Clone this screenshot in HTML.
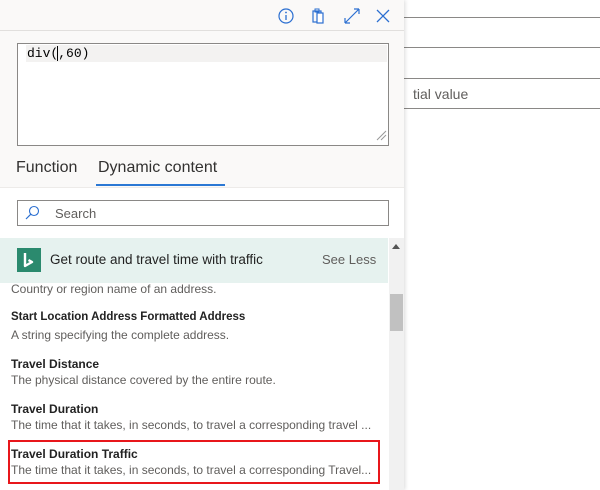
<!DOCTYPE html>
<html><head><style>
*{margin:0;padding:0;box-sizing:border-box}
body{width:600px;height:490px;overflow:hidden;background:#fff;font-family:"Liberation Sans",sans-serif;position:relative}
.abs{position:absolute}
.hl{position:absolute;left:404px;right:0;height:1px;background:#8a8886}
.panel{position:absolute;left:0;top:0;width:404px;height:490px;background:#faf9f8;box-shadow:1px 0 4px rgba(0,0,0,.15)}
.t{font-size:12px;font-weight:bold;color:#222;position:absolute;left:11px}
.d{font-size:12px;color:#605e5c;position:absolute;left:11px;white-space:nowrap}
</style></head><body>
<div class="hl" style="top:17px"></div>
<div class="hl" style="top:47px"></div>
<div class="hl" style="top:78px"></div>
<div class="hl" style="top:108px"></div>
<div class="abs" style="left:413px;top:86px;font-size:14px;color:#605e5c">tial value</div>
<div class="panel">
 <div class="abs" style="left:0;top:30px;width:404px;height:1px;background:#e1dfdd"></div>
 <svg class="abs" style="left:276px;top:6px" width="20" height="20" viewBox="0 0 20 20"><circle cx="10" cy="10" r="7" fill="none" stroke="#2b6fd1" stroke-width="1.2"/><line x1="10" y1="9" x2="10" y2="14" stroke="#2b6fd1" stroke-width="1.3"/><circle cx="10" cy="6.5" r=".9" fill="#2b6fd1"/></svg>
 <svg class="abs" style="left:309px;top:6px" width="20" height="20" viewBox="0 0 20 20"><rect x="4" y="5" width="8" height="11" fill="none" stroke="#2b6fd1" stroke-width="1.2"/><rect x="8" y="7" width="6" height="10" fill="#fff" stroke="#2b6fd1" stroke-width="1.2"/><rect x="6" y="3" width="4" height="3" fill="none" stroke="#2b6fd1"/></svg>
 <svg class="abs" style="left:342px;top:6px" width="20" height="20" viewBox="0 0 20 20"><path d="M3 17L17 3M3 17v-5M3 17h5M17 3h-5M17 3v5" fill="none" stroke="#2b6fd1" stroke-width="1.2"/></svg>
 <svg class="abs" style="left:374px;top:7px" width="18" height="18" viewBox="0 0 18 18"><path d="M3 3L15 15M15 3L3 15" stroke="#2b6fd1" stroke-width="1.3"/></svg>
 <div class="abs" style="left:17px;top:43px;width:372px;height:103px;background:#fff;border:1px solid #8a8886"></div>
 <div class="abs" style="left:26px;top:45px;width:361px;height:17px;background:#f3f2f1"></div>
 <div class="abs" style="left:27px;top:46px;font-family:'Liberation Mono',monospace;font-size:13px;color:#000;white-space:nowrap">div(<span style="border-left:1.5px solid #000;margin-left:-1px"></span>,60)</div>
 <svg class="abs" style="left:375px;top:129px" width="12" height="12"><path d="M2 11L11 2M6 11L11 6" stroke="#999" stroke-width="1"/></svg>
 <div class="abs" style="left:16px;top:159px;font-size:16px;color:#323130">Function</div>
 <div class="abs" style="left:98px;top:159px;font-size:16px;color:#323130">Dynamic content</div>
 <div class="abs" style="left:96px;top:184px;width:129px;height:2px;background:#2b78d4"></div>
 <div class="abs" style="left:0;top:187px;width:404px;height:303px;background:#fff;border-top:1px solid #edebe9"></div>
 <div class="abs" style="left:17px;top:200px;width:372px;height:26px;background:#fff;border:1px solid #8a8886"></div>
 <svg class="abs" style="left:23px;top:204px" width="18" height="18" viewBox="0 0 18 18"><circle cx="11" cy="7" r="4.5" fill="none" stroke="#2b6fd1" stroke-width="1.1"/><line x1="7.7" y1="10.3" x2="3" y2="15" stroke="#2b6fd1" stroke-width="1.2"/></svg>
 <div class="abs" style="left:55px;top:206px;font-size:13px;color:#605e5c">Search</div>
 <div class="abs" style="left:0;top:238px;width:388px;height:45px;background:#e6f2ef"></div>
 <div class="abs" style="left:17px;top:248px;width:24px;height:24px;background:#2b8a6e"></div>
 <svg class="abs" style="left:17px;top:248px" width="24" height="24" viewBox="0 0 24 24"><path d="M8 5v13l7-4-3.5-2" fill="none" stroke="#fff" stroke-width="2.4" stroke-linejoin="round"/></svg>
 <div class="abs" style="left:50px;top:252px;font-size:13.5px;color:#222">Get route and travel time with traffic</div>
 <div class="abs" style="left:322px;top:252px;font-size:13px;color:#605e5c">See Less</div>
 <div class="abs" style="left:389px;top:238px;width:15px;height:252px;background:#f1f1f1"></div>
 <div class="abs" style="left:392px;top:244px;width:0;height:0;border-left:4px solid transparent;border-right:4px solid transparent;border-bottom:5px solid #555"></div>
 <div class="abs" style="left:390px;top:294px;width:13px;height:37px;background:#c1c1c1"></div>
 <div class="d" style="top:282px">Country or region name of an address.</div>
 <div class="t" style="top:311px;font-size:11.5px">Start Location Address Formatted Address</div>
 <div class="d" style="top:328px">A string specifying the complete address.</div>
 <div class="t" style="top:357px">Travel Distance</div>
 <div class="d" style="top:373px">The physical distance covered by the entire route.</div>
 <div class="t" style="top:402px">Travel Duration</div>
 <div class="d" style="top:418px">The time that it takes, in seconds, to travel a corresponding travel ...</div>
 <div class="t" style="top:447px">Travel Duration Traffic</div>
 <div class="d" style="top:463px">The time that it takes, in seconds, to travel a corresponding Travel...</div>
 <div class="abs" style="left:8px;top:440px;width:372px;height:44px;border:2px solid #e8161b"></div>
</div>
</body></html>
